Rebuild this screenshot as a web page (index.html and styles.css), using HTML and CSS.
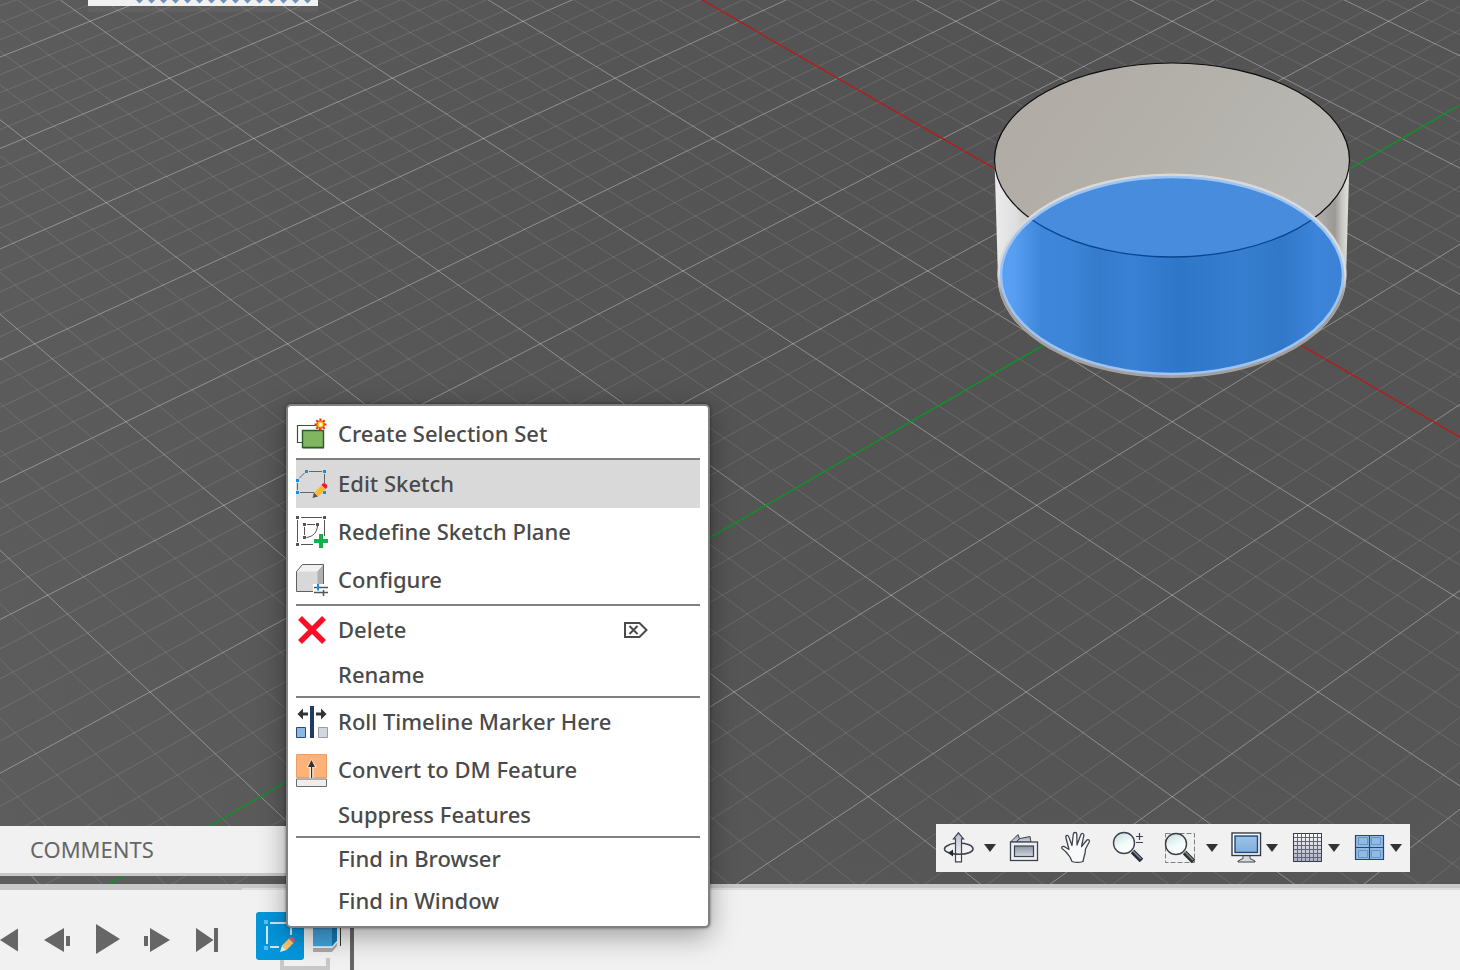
FILE: index.html
```html
<!DOCTYPE html>
<html lang="en">
<head>
    <meta charset="UTF-8">
    <meta name="viewport" content="width=device-width, initial-scale=1.0">
    <title>Sketch Timeline</title>
    <link rel="stylesheet" href="styles.css">
</head>
<body>
    <main class="viewport">
        <svg class="scene" viewBox="0 0 1460 884" preserveAspectRatio="xMidYMid slice" aria-hidden="true">
            <defs>
                <linearGradient id="wall" gradientUnits="userSpaceOnUse" x1="995" y1="0" x2="1349" y2="0">
                    <stop offset="0" stop-color="#ebebeb"/>
                    <stop offset="0.06" stop-color="#dedede"/>
                    <stop offset="0.12" stop-color="#b9b9b7"/>
                    <stop offset="0.5" stop-color="#9a9a98"/>
                    <stop offset="0.9" stop-color="#b5b4b0"/>
                    <stop offset="0.96" stop-color="#9b9996"/>
                    <stop offset="0.98" stop-color="#c9c7c3"/>
                    <stop offset="1" stop-color="#e4e2de"/>
                </linearGradient>
                <linearGradient id="cap" x1="0" y1="0" x2="1" y2="0.4">
                    <stop offset="0" stop-color="#b0aaa4"/>
                    <stop offset="0.5" stop-color="#b3b0a9"/>
                    <stop offset="1" stop-color="#b9b8b4"/>
                </linearGradient>
                <linearGradient id="selected" gradientUnits="userSpaceOnUse" x1="1000" y1="0" x2="1344" y2="0">
                    <stop offset="0" stop-color="#58a0f5"/>
                    <stop offset="0.04" stop-color="#589ff4"/>
                    <stop offset="0.12" stop-color="#3e86d9"/>
                    <stop offset="0.2" stop-color="#3d85d9"/>
                    <stop offset="0.29" stop-color="#347bcb"/>
                    <stop offset="0.38" stop-color="#3981d4"/>
                    <stop offset="0.52" stop-color="#2e76c8"/>
                    <stop offset="0.7" stop-color="#367ecf"/>
                    <stop offset="0.82" stop-color="#3178c8"/>
                    <stop offset="0.92" stop-color="#3c84da"/>
                    <stop offset="1" stop-color="#3c83d6"/>
                </linearGradient>
                <linearGradient id="rim" x1="0" y1="0" x2="0" y2="1">
                    <stop offset="0" stop-color="#dbd9d6"/>
                    <stop offset="0.5" stop-color="#dcdcdc"/>
                    <stop offset="0.6" stop-color="#a09f9d"/>
                    <stop offset="1" stop-color="#a3a19e"/>
                </linearGradient>
                <clipPath id="base-clip"><ellipse cx="1172" cy="275" rx="171" ry="98"/></clipPath>
            </defs>
            <path class="grid-minor" id="gridMinor"/>
            <path class="grid-major" id="gridMajor"/>
            <path class="axis-red" id="axisRed"/>
            <path class="axis-green" id="axisGreen"/>

            <!-- Cylinder body -->
            <path d="M994.500 160 L998 278 A174 99 0 0 0 1346 278 L1349.500 160 Z" fill="url(#wall)"/>
            <ellipse cx="1172" cy="160" rx="177.500" ry="97" fill="url(#cap)" stroke="#0c0c0c" stroke-width="1.200"/>
            <!-- Selected face -->
            <ellipse cx="1172" cy="277" rx="173" ry="99.500" fill="none" stroke="#a3a19e" stroke-width="3"/>
            <ellipse cx="1172" cy="275" rx="173" ry="100" fill="none" stroke="url(#rim)" stroke-width="3"/>
            <ellipse cx="1172" cy="275.500" rx="171" ry="98.500" fill="url(#selected)"/>
            <g clip-path="url(#base-clip)">
                <ellipse cx="1172" cy="160" rx="177.500" ry="97" fill="#488ddd" stroke="#0a4592" stroke-width="1.300"/>
            </g>
            <ellipse cx="1172" cy="275.500" rx="171" ry="98.500" fill="none" stroke="#9ec4f4" stroke-width="2.500"/>
        </svg>

        <div class="top-panel">
            <svg width="180" height="4" viewBox="0 0 180 4" aria-hidden="true">
                <path fill="#7590b5" d="M0 0h7l-3.500 3.500zM12 0h7l-3.500 3.500zM24 0h7l-3.500 3.500zM36 0h7l-3.500 3.500zM48 0h7l-3.500 3.500zM60 0h7l-3.500 3.500zM72 0h7l-3.500 3.500zM84 0h7l-3.500 3.500zM96 0h7l-3.500 3.500zM108 0h7l-3.500 3.500zM120 0h7l-3.500 3.500zM132 0h7l-3.500 3.500zM144 0h7l-3.500 3.500zM156 0h7l-3.500 3.500zM168 0h7l-3.500 3.500z"/>
            </svg>
        </div>

        <div class="comments">COMMENTS</div>

        <nav class="nav-bar" aria-label="Navigation">
            <svg class="defs" width="0" height="0" aria-hidden="true">
                <defs>
                    <linearGradient id="steel" x1="0" y1="0" x2="0" y2="1">
                        <stop offset="0" stop-color="#b9bfcb"/><stop offset="1" stop-color="#ffffff"/>
                    </linearGradient>
                    <linearGradient id="steelDark" x1="0" y1="0" x2="0" y2="1">
                        <stop offset="0" stop-color="#8b93a3"/><stop offset="1" stop-color="#d3d7df"/>
                    </linearGradient>
                    <linearGradient id="glass" x1="0" y1="0" x2="0.500" y2="1">
                        <stop offset="0" stop-color="#bfdcdc"/><stop offset="0.600" stop-color="#f1f9f9"/><stop offset="1" stop-color="#ffffff"/>
                    </linearGradient>
                    <linearGradient id="screen" x1="0" y1="0" x2="0" y2="1">
                        <stop offset="0" stop-color="#9cc3e8"/><stop offset="1" stop-color="#82afdc"/>
                    </linearGradient>
                    <linearGradient id="mesh" x1="0" y1="0" x2="0" y2="1">
                        <stop offset="0" stop-color="#ffffff"/><stop offset="1" stop-color="#a6acc6"/>
                    </linearGradient>
                </defs>
            </svg>
            <div class="nav-group wide">
                <button class="nav-button" aria-label="Orbit">
                    <svg class="icon" viewBox="0 0 32 32">
                        <path d="M6 13.500C9 11.500 13 11 17 11c8 0 14 2.500 14 6" fill="none" stroke="#3e4450" stroke-width="1.600"/>
                        <path d="M16.500 .8l5 6h-2v23h-6v-23h-2z" fill="url(#steel)" stroke="#3e4450" stroke-width="1.200"/>
                        <path d="M31 17c0 3-6 5.200-13 5.200-4 0-8-.4-10-1.500M6 13.500C3 14.500 2.500 16 2.500 17c0 1.500 2 3 5 3.800" fill="none" stroke="#3e4450" stroke-width="1.600"/>
                        <path d="M6 21l5-3.500v7z" fill="#222733"/>
                    </svg>
                </button>
                <button class="nav-caret" aria-label="Orbit options"></button>
            </div>
            <button class="nav-button spaced" aria-label="Look At">
                <svg class="icon" viewBox="0 0 32 32">
                    <path d="M2.500 10L10 2.500l1.500 4L8 10zM8 10l4-3.500L22 4.500l1 5.500z" fill="url(#steelDark)" stroke="#3e4450"/>
                    <rect x="2.500" y="10" width="27" height="18.500" fill="#eef0f4" stroke="#3e4450" stroke-width="1.300"/>
                    <rect x="6.500" y="14" width="19" height="10.500" fill="url(#steelDark)" stroke="#3e4450" stroke-width="1.200"/>
                </svg>
            </button>
            <button class="nav-button spaced" aria-label="Pan">
                <svg class="icon" viewBox="0 0 32 32">
                    <path d="M12 29.500L10 25C8 22 5 18.500 2 16.500c-1-1.300.5-2.700 2.500-1.800L9 17.500 6 6c-.8-3 2-3.500 2.800-1L12 13.500 13.300 2.300c.2-2.400 3.400-2.400 3.500 0L17 13l3.800-10.300c.8-2.200 3.400-1.300 3 .9L21.500 14.500l5-6c1.500-1.700 3.700-.5 2.700 1.500L25.500 17c-.2 4-.7 6-1.500 8l-1 4.500c-3 1-8 1-11 0z" fill="#fafafa" stroke="#3e4450" stroke-width="1.300" stroke-linejoin="round"/>
                </svg>
            </button>
            <button class="nav-button spaced" aria-label="Zoom">
                <svg class="icon" viewBox="0 0 32 32">
                    <path d="M20.500 19.500l9 9" stroke="#252b36" stroke-width="5"/>
                    <path d="M21 19l8 8" stroke="#828997" stroke-width="1.500"/>
                    <circle cx="12" cy="11" r="10.500" fill="url(#glass)" stroke="#3e4450" stroke-width="1.400"/>
                    <path d="M24 4.500h7M27.500 1v7M24 10.500h7" stroke="#3e4450" stroke-width="1.200"/>
                </svg>
            </button>
            <div class="nav-group wide">
                <button class="nav-button" aria-label="Zoom Window">
                    <svg class="icon" viewBox="0 0 32 32">
                        <rect x="1.500" y="1.500" width="29" height="29" fill="none" stroke="#808080" stroke-dasharray="5 2"/>
                        <path d="M20.500 20.500l9 9" stroke="#2d3030" stroke-width="5"/>
                        <path d="M21 20l8 8" stroke="#858888" stroke-width="1.500"/>
                        <circle cx="12" cy="12" r="10.500" fill="url(#glass)" stroke="#3c4043" stroke-width="1.400"/>
                    </svg>
                </button>
                <button class="nav-caret" aria-label="Zoom options"></button>
            </div>
            <div class="nav-group">
                <button class="nav-button" aria-label="Display Settings">
                    <svg class="icon" viewBox="0 0 32 32">
                        <path d="M13 23.500h7v3l5 2.500v1H8v-1l5-2.500z" fill="#d5d8df" stroke="#3e4450"/>
                        <rect x="2" y="1" width="28.500" height="22.500" fill="#fff" stroke="#343b48" stroke-width="1.400"/>
                        <rect x="5" y="4" width="22.500" height="16.500" fill="url(#screen)" stroke="#21477c" stroke-width="1.400"/>
                    </svg>
                </button>
                <button class="nav-caret" aria-label="Display options"></button>
            </div>
            <div class="nav-group">
                <button class="nav-button" aria-label="Grid and Snaps">
                    <svg class="icon" viewBox="0 0 32 32">
                        <rect x="1.500" y="1.500" width="28" height="28" fill="url(#mesh)"/>
                        <path d="M5.500 2v28M9.500 2v28M13.500 2v28M17.500 2v28M21.500 2v28M25.500 2v28M2 5.500h28M2 9.500h28M2 13.500h28M2 17.500h28M2 21.500h28M2 25.500h28" stroke="#64666e" stroke-width="1"/>
                        <rect x="1.500" y="1.500" width="28" height="28" fill="none" stroke="#3c3e46"/>
                    </svg>
                </button>
                <button class="nav-caret" aria-label="Grid options"></button>
            </div>
            <div class="nav-group last">
                <button class="nav-button" aria-label="Viewports">
                    <svg class="icon" viewBox="0 0 32 32">
                        <path d="M1.500 3.500h14v12h-14zM15.500 3.500h14v12h-14zM1.500 15.500h14v12h-14zM15.500 15.500h14v12h-14z" fill="#90bbe5" stroke="#21477c" stroke-width="1.200"/>
                        <path d="M4.500 5.500h9v7h-9zM17.500 5.500h9v7h-9zM4.500 18.500h9v7h-9zM17.500 18.500h9v7h-9z" fill="none" stroke="#6993c1"/>
                    </svg>
                </button>
                <button class="nav-caret" aria-label="Viewport options"></button>
            </div>
        </nav>
    </main>

    <footer class="timeline">
        <div class="playback">
            <button class="play-button" aria-label="Go to start"><svg width="18" height="48"><path d="M0 28l18-11.500v23z"/></svg></button>
            <button class="play-button" aria-label="Step back"><svg width="26" height="48"><path d="M0 28l20-12v24zM22 24h4v10h-4z"/></svg></button>
            <button class="play-button" aria-label="Play"><svg width="22" height="48"><path d="M0 12l24 15-24 15z"/></svg></button>
            <button class="play-button" aria-label="Step forward"><svg width="26" height="48"><path d="M0 24h4v10H0zM6 16l20 12L6 40z"/></svg></button>
            <button class="play-button" aria-label="Go to end"><svg width="22" height="48"><path d="M0 16l17.500 12L0 40zM18 16h4v24h-4z"/></svg></button>
        </div>
        <div class="features">
            <button class="feature active" aria-label="Sketch">
                <svg width="48" height="48" viewBox="0 0 48 48">
                    <path d="M14 11h22M11 14v18M14 35h9M35 14v9" stroke="#d7e6ee" stroke-width="2" fill="none"/>
                    <path d="M8 8h4v4H8zM8 34h4v4H8z" fill="#52c0fa"/>
                    <path d="M24 40l2-6.500 4.500 4.500z" fill="#e6edf1"/>
                    <path d="M26 33.500l7-7 4.500 4.500-7 7z" fill="#fbc56a"/>
                    <path d="M33 26.500a3.200 3.200 0 1 1 4.500 4.500z" fill="#f4525e"/>
                </svg>
            </button>
            <button class="feature" aria-label="Extrude">
                <svg width="48" height="48" viewBox="0 0 48 48">
                    <path d="M9 36h19l5-5v3l-5 6H9z" fill="#a9a9a9"/>
                    <path d="M9 14h19v20.500H9z" fill="#42a3dc"/>
                    <path d="M28 14h5v15l-5 5.500z" fill="#1479b4"/>
                    <path d="M9 35h19l5-5.500" stroke="#f6f6f6" fill="none"/>
                    <path d="M36.500 14v20" stroke="#333"/>
                </svg>
            </button>
            <span class="group-bracket"></span>
            <span class="marker"></span>
        </div>
    </footer>

    <div class="context-menu" role="menu">
        <button class="menu-item" role="menuitem">
            <svg class="icon" viewBox="0 0 32 32">
                <path d="M1.500 7.500h22v17h-22z" fill="#fff" stroke="#2c5b2c" stroke-width="1.200"/>
                <path d="M7 13h21v18H7z" fill="#b5b5b5"/>
                <path d="M6.500 12.500h21v17h-21z" fill="#82b55f" stroke="#285c2b" stroke-width="1.400"/>
                <path d="M24.500 .5v12M18.500 6.500h12M20.300 2.300l8.400 8.400M28.700 2.300l-8.400 8.400" stroke="#e3331b" stroke-width="2"/>
                <circle cx="24.500" cy="6.500" r="3.600" fill="#ffd21e" stroke="#f0551c" stroke-width="1.400"/>
                <circle cx="24.500" cy="6.500" r="1.500" fill="#fff"/>
            </svg>
            <span>Create Selection Set</span>
        </button>
        <hr>
        <button class="menu-item hovered" role="menuitem">
            <svg class="icon" viewBox="0 0 32 32">
                <path d="M13 3.500h13M3.500 10l5-5M1.500 15v7M4 24.500h14M28.500 6v9" stroke="#666" fill="none"/>
                <path d="M9 2h3v3H9zM27 2h3v3h-3zM0 11h3v3H0zM0 23h3v3H0zM27 23h3v3h-3z" fill="#0c8fe8"/>
                <path d="M16.500 30l1.500-5.500 4 4z" fill="#555"/>
                <path d="M18.300 24.500l7-7 4 4-7 7z" fill="#fbb829"/>
                <path d="M25.500 17a3 3 0 1 1 4 4z" fill="#f80f31"/>
            </svg>
            <span>Edit Sketch</span>
        </button>
        <button class="menu-item" role="menuitem">
            <svg class="icon" viewBox="0 0 32 32">
                <path d="M5 1.500h21M1.500 4v22M28.500 4v16M5 28.500h12" stroke="#555" fill="none"/>
                <path d="M11 8.500h8M8.500 11v8M21.500 10c-.5 6-4 10.500-11 11.500" stroke="#555" fill="none"/>
                <path d="M0 0h3v3H0zM27 0h3v3h-3zM0 27h3v3H0zM7 7h3v3H7zM20 7h3v3h-3zM7 20h3v3H7z" fill="#555"/>
                <path d="M23 18h4v5h5v4h-5v5h-4v-5h-5v-4h5z" fill="#0fb14a"/>
            </svg>
            <span>Redefine Sketch Plane</span>
        </button>
        <button class="menu-item" role="menuitem">
            <svg class="icon" viewBox="0 0 32 32">
                <path d="M.5 7.500l6-7h21v21l-6 6H.5z" fill="#d8d8d8"/>
                <path d="M.5 7.500l6-7h21l-6 7z" fill="#f2f2f2"/>
                <path d="M27.500 .5l-6 7v20l6-6z" fill="#b0b0b0"/>
                <path d="M.5 7.500l6-7h21v27H.5z" fill="none" stroke="#606060"/>
                <path d="M17 20h15v12H17z" fill="#fff"/>
                <path d="M18 23.500h14M18 28.500h14M27.500 26v6" stroke="#555" stroke-width="1.500"/>
                <path d="M22 20v6.500" stroke="#1490ea" stroke-width="2"/>
            </svg>
            <span>Configure</span>
        </button>
        <hr>
        <button class="menu-item" role="menuitem">
            <svg class="icon" viewBox="0 0 32 32"><path d="M4 4l24 24M28 4L4 28" stroke="#fc0c25" stroke-width="5.400"/></svg>
            <span>Delete</span>
            <svg class="shortcut" width="24" height="16" viewBox="0 0 24 16"><path d="M1 1h14.500l7 7-7 7H1zM5.500 4l8 8M13.500 4l-8 8" fill="none" stroke="#4a4a4a" stroke-width="2"/></svg>
        </button>
        <button class="menu-item plain" role="menuitem"><span>Rename</span></button>
        <hr>
        <button class="menu-item" role="menuitem">
            <svg class="icon" viewBox="0 0 32 32">
                <path d="M14 0h4v32h-4z" fill="#1e3b63"/>
                <path d="M1.500 8l5.500-5.500v4h5v3H7v4zM30.500 8L25 2.500v4h-5v3h5v4z" fill="#333"/>
                <path d="M.5 21.500h9v10h-9z" fill="#8cb7e2" stroke="#29496f"/>
                <path d="M22.500 21.500h9v10h-9z" fill="#d2d6df" stroke="#999da5"/>
            </svg>
            <span>Roll Timeline Marker Here</span>
        </button>
        <button class="menu-item" role="menuitem">
            <svg class="icon" viewBox="0 0 32 32">
                <path d="M.5 .5h30v23H.5z" fill="#fdb378" stroke="#eba06a"/>
                <path d="M15.500 5l-5 8.500h3V24h4V13.500h3z" fill="#fff0df"/>
                <path d="M15.500 6L12 13h3v11h1.200V13H19z" fill="#333"/>
                <path d="M.5 25h30v7.500H.5z" fill="#eee" stroke="#6b6b6b"/>
            </svg>
            <span>Convert to DM Feature</span>
        </button>
        <button class="menu-item plain" role="menuitem"><span>Suppress Features</span></button>
        <hr>
        <button class="menu-item plain" role="menuitem"><span>Find in Browser</span></button>
        <button class="menu-item plain" role="menuitem"><span>Find in Window</span></button>
    </div>

    <script>
        // Ground plane in perspective: s is depth, lateral is measured from the origin column
        function project(lateral, s) {
            const unit = 1 / (0.004621 - 0.000133 * s);
            const x = 1172.2 + lateral * unit;
            const y = 21.3 + 8.865 * (unit - 216.4);
            return x.toFixed(1) + ' ' + y.toFixed(1);
        }

        function gridLine(offset, direction) {
            return 'M' + project(offset + direction * -1, -2) + 'L' + project(offset + direction * 6.5, 13);
        }

        let minor = '';
        let major = '';
        for (let i = -65; i <= 65; i++) {
            const lines = gridLine(i / 5, 1) + gridLine(i / 5, -1);
            if (i % 5 === 0) {
                major += lines;
            } else {
                minor += lines;
            }
        }

        document.getElementById('gridMinor').setAttribute('d', minor);
        document.getElementById('gridMajor').setAttribute('d', major);
        document.getElementById('axisRed').setAttribute('d', gridLine(-2, 1));
        document.getElementById('axisGreen').setAttribute('d', gridLine(2, -1));
    </script>
</body>
</html>
```
FILE: styles.css
```css
* {
    box-sizing: border-box;
}
body {
    font-family: "Noto Sans", "Open Sans", sans-serif;
    margin: 0;
    height: 100vh;
    display: flex;
    flex-direction: column;
    position: relative;
    overflow: hidden;
    background-color: #f1f1f1;
    color: #4a4a4a;
}
button {
    font-family: inherit;
    color: inherit;
    margin: 0;
    padding: 0;
    border: none;
    background: none;
}
svg {
    display: block;
}
.icon {
    width: 32px;
    height: 32px;
    flex: none;
    overflow: visible;
}

/* 3D canvas */
.viewport {
    flex: 1;
    min-height: 0;
    position: relative;
    overflow: hidden;
    background: radial-gradient(circle at 75% 30%, #515251 0%, #545554 40%, #5d5d5d 100%);
}
.scene {
    width: 100%;
    height: 100%;
}
.grid-minor,
.grid-major,
.axis-red,
.axis-green {
    fill: none;
    stroke-width: 1;
}
.grid-minor {
    stroke: rgba(255, 255, 255, 0.12);
}
.grid-major {
    stroke: rgba(255, 255, 255, 0.34);
}
.axis-red {
    stroke: #b81212;
    stroke-width: 1.3;
}
.axis-green {
    stroke: #00931c;
    stroke-width: 1.3;
}

/* Panels over the canvas */
.top-panel {
    position: absolute;
    top: 0;
    left: 88px;
    width: 230px;
    height: 6px;
    padding-left: 48px;
    background-color: #f1f1f1;
    box-shadow: 0 6px 2px rgba(255, 255, 255, 0.05);
}
.comments {
    position: absolute;
    left: 0;
    bottom: 8px;
    width: 320px;
    height: 50px;
    padding-left: 30px;
    background-color: #f1f1f1;
    border-bottom: 3px solid #c8c8c8;
    font-size: 22px;
    line-height: 47px;
    color: #666;
}
.nav-bar {
    position: absolute;
    right: 50px;
    bottom: 12px;
    height: 48px;
    padding: 0 4px 0 6px;
    display: flex;
    align-items: center;
    background-color: #f1f1f1;
}
.defs {
    position: absolute;
}
.nav-group {
    display: flex;
    align-items: center;
    margin-right: 10px;
}
.nav-group.wide {
    gap: 6px;
    margin-right: 8px;
}
.nav-group.last {
    margin-right: 0;
}
.nav-button {
    width: 32px;
    height: 32px;
}
.nav-button.spaced {
    margin-right: 20px;
}
.nav-caret {
    width: 20px;
    height: 32px;
    display: flex;
    align-items: center;
    justify-content: center;
}
.nav-caret::after {
    content: "";
    border: 6px solid transparent;
    border-top: 8px solid #333;
    border-bottom: none;
}

/* Timeline */
.timeline {
    height: 86px;
    display: flex;
    align-items: flex-start;
    padding-top: 24px;
    overflow: hidden;
    border-top: 4px solid #c8c8c8;
    /* second edge line, darker above the playback controls */
    background:
        linear-gradient(#c8c8c8, #c8c8c8) 0 0 / 242px 2px no-repeat,
        linear-gradient(#dedede, #dedede) 0 0 / 100% 2px no-repeat;
}
.playback {
    display: flex;
    gap: 26px;
    margin-right: 38px;
    fill: #666;
}
.play-button svg {
    overflow: visible;
}
.features {
    display: flex;
    position: relative;
}
.feature {
    width: 48px;
    height: 48px;
    border-radius: 3px;
}
.feature.active {
    background-color: #0496dc;
}
.group-bracket {
    position: absolute;
    z-index: -1;
    left: 24px;
    top: 46px;
    width: 50px;
    height: 12px;
    border: 4px solid #c8c8c8;
    border-top: none;
}
.marker {
    position: absolute;
    left: 94px;
    top: 0;
    width: 4px;
    height: 60px;
    background-color: #666;
}

/* Context menu */
.context-menu {
    position: absolute;
    left: 286px;
    bottom: 42px;
    width: 424px;
    padding: 4px 8px;
    background-color: #fff;
    border: 2px solid #808080;
    border-radius: 5px;
    box-shadow: 0 0 3px rgba(0, 0, 0, 0.5), 0 8px 28px rgba(0, 0, 0, 0.35);
}
.context-menu hr {
    margin: 0;
    border: none;
    height: 2px;
    background-color: #808080;
}
.menu-item {
    width: 100%;
    height: 48px;
    display: flex;
    align-items: center;
    gap: 10px;
    font-size: 22px;
    font-weight: 500;
    line-height: 30px;
    text-align: left;
    white-space: nowrap;
}
.menu-item span {
    padding-bottom: 2px;
}
.menu-item.plain {
    height: 42px;
    padding-left: 42px;
}
.menu-item.hovered,
.menu-item:hover {
    background-color: #d9d9d9;
}
.shortcut {
    margin-left: auto;
    margin-right: 52px;
}
```
